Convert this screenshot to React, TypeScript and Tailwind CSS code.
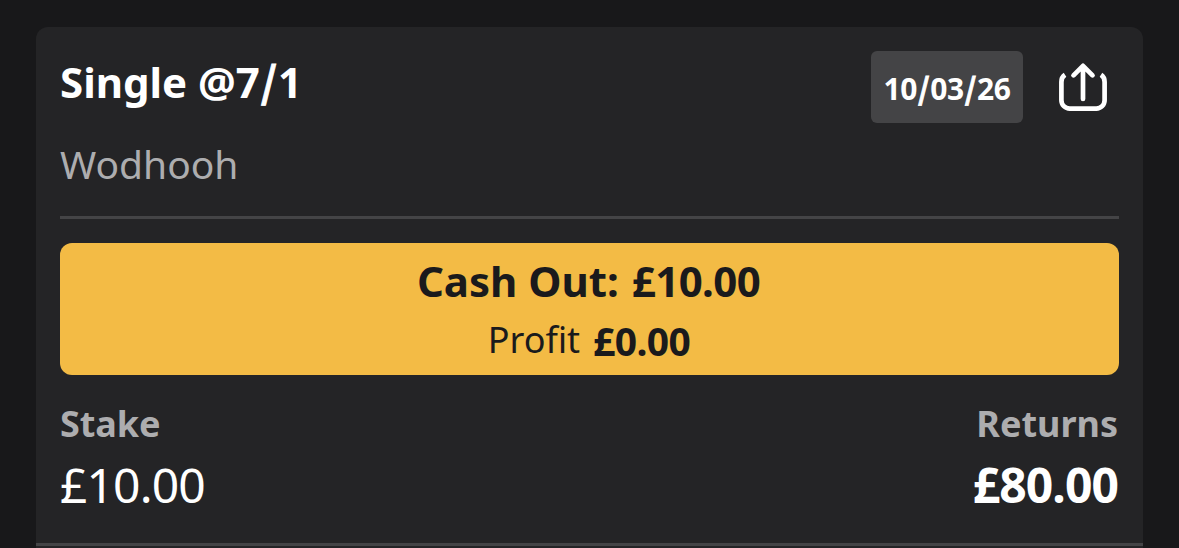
import React from "react";

function ShareIcon() {
  return (
    <svg width="50" height="50" viewBox="0 0 50 50" fill="none" stroke="#fff" strokeWidth="4.700" strokeLinecap="round" strokeLinejoin="round">
      <path strokeLinecap="butt" d="M7 12.800Q3.400 15.200 3.400 20V38.300a8.300 8.300 0 0 0 8.300 8.300h26.600a8.300 8.300 0 0 0 8.300-8.300V20Q46.600 15.200 43 12.800" />
      <path d="M25 36.900V4M15.500 13.300L25 3.800l9.500 9.500" />
    </svg>
  );
}

function Slash() {
  return <span className="px-px font-['Noto_Sans_CJK_JP',sans-serif] leading-none [-webkit-text-stroke:0.8px_white]">/</span>;
}

export default function App() {
  return (
    <div className="h-screen w-full overflow-hidden bg-[#18181a] px-9 pt-[27px] font-['Noto_Sans',sans-serif] text-white">
      <div className="h-[600px] rounded-t-xl bg-[#242426] pt-6">
        <div className="flex h-[72px] items-start justify-between px-6">
          <h1 className="pt-[2px] text-[42px] leading-[58px] font-bold">
            Single @7<Slash />1
          </h1>
          <div className="flex h-full items-center">
            <div className="flex h-full w-[152px] items-center justify-center rounded-md bg-[#444446] pt-[4px] text-[30px] font-bold tracking-[-0.4px]">
              <span className="leading-[42px]">
                10<Slash />03<Slash />26
              </span>
            </div>
            <button className="mr-[11px] ml-[35px]">
              <ShareIcon />
            </button>
          </div>
        </div>
        <p className="mx-6 mt-[14px] h-[79px] text-[39px] leading-[54px] text-[#adadaf]">Wodhooh</p>
        <div className="mx-6 h-[3px] bg-[#444446]" />
        <button className="mx-6 mt-6 flex h-[132px] w-[1059px] flex-col items-center rounded-xl bg-[#f3bb45] pt-[8px] text-[#1a1a1c]">
          <span className="pr-[2px] text-[42px] leading-[60px] font-bold">
            Cash Out: <span className="ml-[2px] tracking-[-0.6px]">£10.00</span>
          </span>
          <span className="flex gap-[13px] pr-px text-[36px] leading-[58px]">
            Profit <b className="pt-px text-[39px] tracking-[-0.6px]">£0.00</b>
          </span>
        </button>
        <div className="mx-6 mt-[24px] flex justify-between">
          <div>
            <p className="text-[36px] leading-[50px] font-bold tracking-[-0.1px] text-[#adadaf]">Stake</p>
            <p className="text-[48px] leading-[71px] tracking-[-0.9px]">£10.00</p>
          </div>
          <div className="text-right">
            <p className="pr-px text-[36px] leading-[50px] font-bold text-[#adadaf]">Returns</p>
            <p className="pr-px text-[48px] leading-[71px] font-bold tracking-[-0.9px]">£80.00</p>
          </div>
        </div>
        <div className="mt-[23px] h-[3px] bg-[#444446]" />
      </div>
    </div>
  );
}
